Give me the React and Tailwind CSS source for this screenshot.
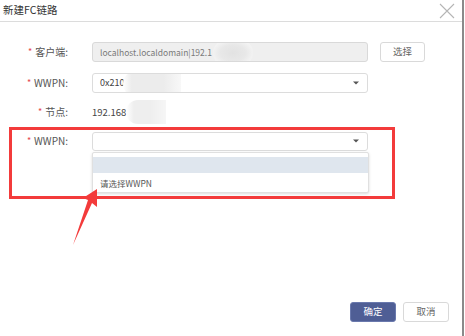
import React from "react";

const Star = () => <span className="text-[#e5484d] text-[9px] mr-[3px] relative top-[-1px]">*</span>;

function Caret() {
  return (
    <svg width="6" height="4" viewBox="0 0 6 4" className="mr-[8px]">
      <path d="M0 0.5 L6 0.5 L3 3.5 Z" fill="#555" />
    </svg>
  );
}

function Row({ label, children, className = "" }) {
  return (
    <div className={"flex items-center h-[20px] " + className}>
      <div className="w-[68px] text-right text-[10px] text-[#555] whitespace-nowrap leading-none">
        <Star />
        {label}:
      </div>
      <div className="ml-[24px] flex items-center">{children}</div>
    </div>
  );
}

export default function App() {
  return (
    <div
      className="relative w-[465px] h-[336px] bg-white overflow-hidden"
      style={{ fontFamily: '"Noto Sans CJK SC", "Noto Sans", sans-serif' }}
    >
      <div className="w-[464px] h-[336px] border-r-2 border-[#8a8a8a] flex flex-col">
        {/* header */}
        <div className="h-[22px] border-b border-[#dcdcdc] flex items-center justify-between pl-[3px] pr-[7px]">
          <span className="text-[10.5px] text-[#333] leading-none">新建FC链路</span>
          <svg width="16" height="16" viewBox="0 0 16 16">
            <path d="M1 1 L15 15 M15 1 L1 15" stroke="#b5b5b5" strokeWidth="1.1" />
          </svg>
        </div>

        {/* body */}
        <div className="flex flex-col pt-[20px]">
          <Row label="客户端">
            <div className="relative w-[276px] h-[20px] bg-[#efefef] border border-[#d9d9d9] rounded-[3px] flex items-center pl-[7px] text-[8.5px] text-[#7a7a7a] overflow-hidden">
              localhost.localdomain|192.1
              <div className="absolute left-[120px] top-[-3px] w-[40px] h-[26px] rounded-full bg-[radial-gradient(ellipse_at_center,#e2e2e2_0%,#e8e8e8_45%,#f6f6f6_80%,#f8f8f8_100%)]" />
            </div>
            <button className="ml-[12px] w-[45px] h-[20px] bg-white border border-[#d9d9d9] rounded-[3px] text-[9.5px] text-[#666] leading-none">
              选择
            </button>
          </Row>

          <Row label="WWPN" className="mt-[11px]">
            <div className="relative w-[276px] h-[20px] bg-white border border-[#dcdcdc] rounded-[3px] flex items-center justify-between pl-[7px] text-[9px] text-[#444] overflow-hidden">
              <span>0x210</span>
              <div className="absolute left-[30px] top-[-3px] w-[58px] h-[26px] bg-[linear-gradient(90deg,#ffffff_0%,#ececec_15%,#ececec_70%,#f8f8f8_100%)] rounded-l-full" />
              <Caret />
            </div>
          </Row>

          <Row label="节点" className="mt-[9px]">
            <div className="relative h-[20px] flex items-center text-[9.5px] text-[#444]">
              <span>192.168</span>
              <div className="absolute left-[34px] top-[-2px] w-[40px] h-[24px] bg-[linear-gradient(90deg,#ffffff_0%,#eeeeee_20%,#eeeeee_60%,#f6f6f6_100%)] rounded-l-full" />
            </div>
          </Row>

          <Row label="WWPN" className="mt-[9px]">
            <div className="w-[276px] h-[19px] bg-white border border-[#dcdcdc] rounded-[3px] flex items-center justify-end">
              <Caret />
            </div>
          </Row>
        </div>

        <div className="flex-1" />

        {/* footer */}
        <div className="flex justify-end gap-[7px] pr-[13px] pb-[14px]">
          <button className="w-[46px] h-[20px] bg-[#4f5e95] border border-[#6a79ad] rounded-[3px] text-[9.5px] text-white leading-none">
            确定
          </button>
          <button className="w-[46px] h-[20px] bg-white border border-[#d9d9d9] rounded-[3px] text-[9.5px] text-[#666] leading-none">
            取消
          </button>
        </div>
      </div>

      {/* dropdown menu */}
      <div className="absolute left-[92px] top-[152px] w-[277px] h-[41px] bg-white border border-[#e0e0e0] rounded-[2px] shadow-[0_1px_3px_rgba(0,0,0,0.15)] pt-[4px]">
        <div className="h-[16px] bg-[#dfe6ee]" />
        <div className="h-[20px] flex items-center pl-[7px] text-[8.5px] text-[#555]">请选择WWPN</div>
      </div>

      {/* annotation box */}
      <div className="absolute left-[9px] top-[127px] w-[386px] h-[72px] border-[3px] border-[#f33b3b]" />

      {/* annotation arrow */}
      <svg className="absolute left-0 top-0" width="465" height="336" viewBox="0 0 465 336">
        <polygon points="97,189 97,207 92,203 73,245 88,200 83,198" fill="#f33b3b" />
      </svg>
    </div>
  );
}
